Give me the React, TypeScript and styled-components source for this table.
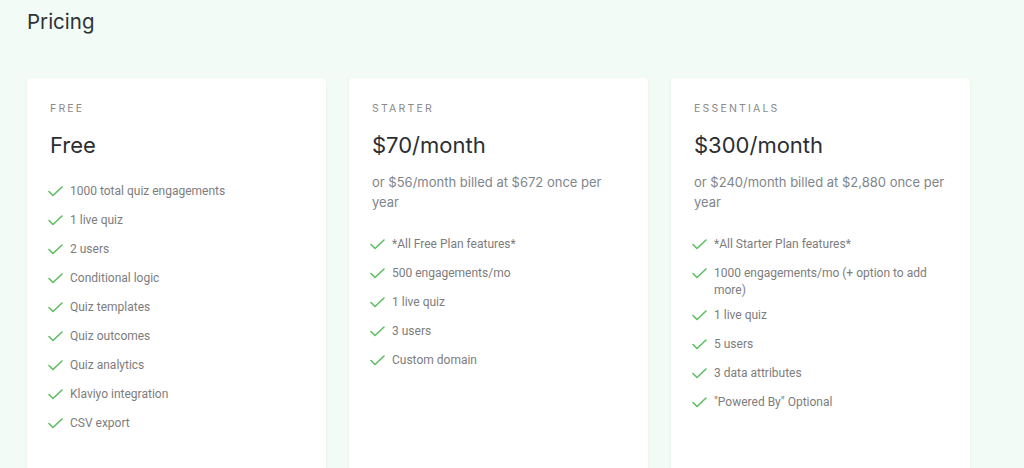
import React from 'react'
import styled, { createGlobalStyle } from 'styled-components'

const GlobalStyle = createGlobalStyle`
  body {
    margin: 0;
    background: #f2fbf5;
    font-family: 'Inter', 'Liberation Sans', sans-serif;
    overflow: hidden;
  }
`

const Page = styled.div`
  padding: 9px 27px 0;
  height: 468px;
  box-sizing: border-box;
  overflow: hidden;
`

const Title = styled.h1`
  margin: 0;
  font-size: 20.5px;
  font-weight: 400;
  color: #2d3338;
  line-height: 26px;
`

const Plans = styled.div`
  margin-top: 43px;
  display: grid;
  grid-template-columns: repeat(3, 299px);
  gap: 23px;
`

const Card = styled.div`
  background: #fff;
  border-radius: 4px;
  box-shadow: 0 1px 3px rgba(60, 90, 70, 0.08);
  padding: 24px 23px 40px;
  min-height: 420px;
`

const Label = styled.div`
  font-size: 10.5px;
  letter-spacing: 2.2px;
  color: #8a8a8a;
  text-transform: uppercase;
  line-height: 14px;
`

const Price = styled.div`
  margin-top: 14px;
  font-size: 22px;
  color: #2b2f33;
  line-height: 30px;
`

const Note = styled.div`
  margin-top: 12px;
  font-size: 13px;
  line-height: 20px;
  color: #80868b;
`

const Features = styled.ul<{ $first: number }>`
  list-style: none;
  margin: ${p => p.$first}px 0 0;
  padding: 0;
  display: flex;
  flex-direction: column;
  gap: 8px;
`

const Feature = styled.li`
  display: flex;
  align-items: flex-start;
  gap: 7px;
  min-height: 21px;
  font-family: 'Roboto', 'Liberation Sans', sans-serif;
  font-size: 12px;
  line-height: 17px;
  color: #7d7d7d;

  svg {
    flex: none;
    margin-top: 3px;
    margin-left: -2px;
  }
`

const Check = () => (
  <svg width="15" height="11" viewBox="0 0 15 11" fill="none">
    <path d="M1 5.5 L5 9.5 L14 1" stroke="#5fbd63" strokeWidth="1.6" strokeLinecap="round" strokeLinejoin="round" />
  </svg>
)

interface Plan {
  label: string
  price: string
  note?: string
  features: string[]
}

const plans: Plan[] = [
  {
    label: 'Free',
    price: 'Free',
    features: [
      '1000 total quiz engagements',
      '1 live quiz',
      '2 users',
      'Conditional logic',
      'Quiz templates',
      'Quiz outcomes',
      'Quiz analytics',
      'Klaviyo integration',
      'CSV export',
    ],
  },
  {
    label: 'Starter',
    price: '$70/month',
    note: 'or $56/month billed at $672 once per year',
    features: ['*All Free Plan features*', '500 engagements/mo', '1 live quiz', '3 users', 'Custom domain'],
  },
  {
    label: 'Essentials',
    price: '$300/month',
    note: 'or $240/month billed at $2,880 once per year',
    features: [
      '*All Starter Plan features*',
      '1000 engagements/mo (+ option to add more)',
      '1 live quiz',
      '5 users',
      '3 data attributes',
      '"Powered By" Optional',
    ],
  },
]

const App: React.FC = () => {
  return (
    <Page>
      <GlobalStyle />
      <Title>Pricing</Title>
      <Plans>
        {plans.map(plan => (
          <Card key={plan.label}>
            <Label>{plan.label}</Label>
            <Price>{plan.price}</Price>
            {plan.note && <Note>{plan.note}</Note>}
            <Features $first={plan.note ? 24 : 23}>
              {plan.features.map(f => (
                <Feature key={f}>
                  <Check />
                  <span>{f}</span>
                </Feature>
              ))}
            </Features>
          </Card>
        ))}
      </Plans>
    </Page>
  )
}

export default App
